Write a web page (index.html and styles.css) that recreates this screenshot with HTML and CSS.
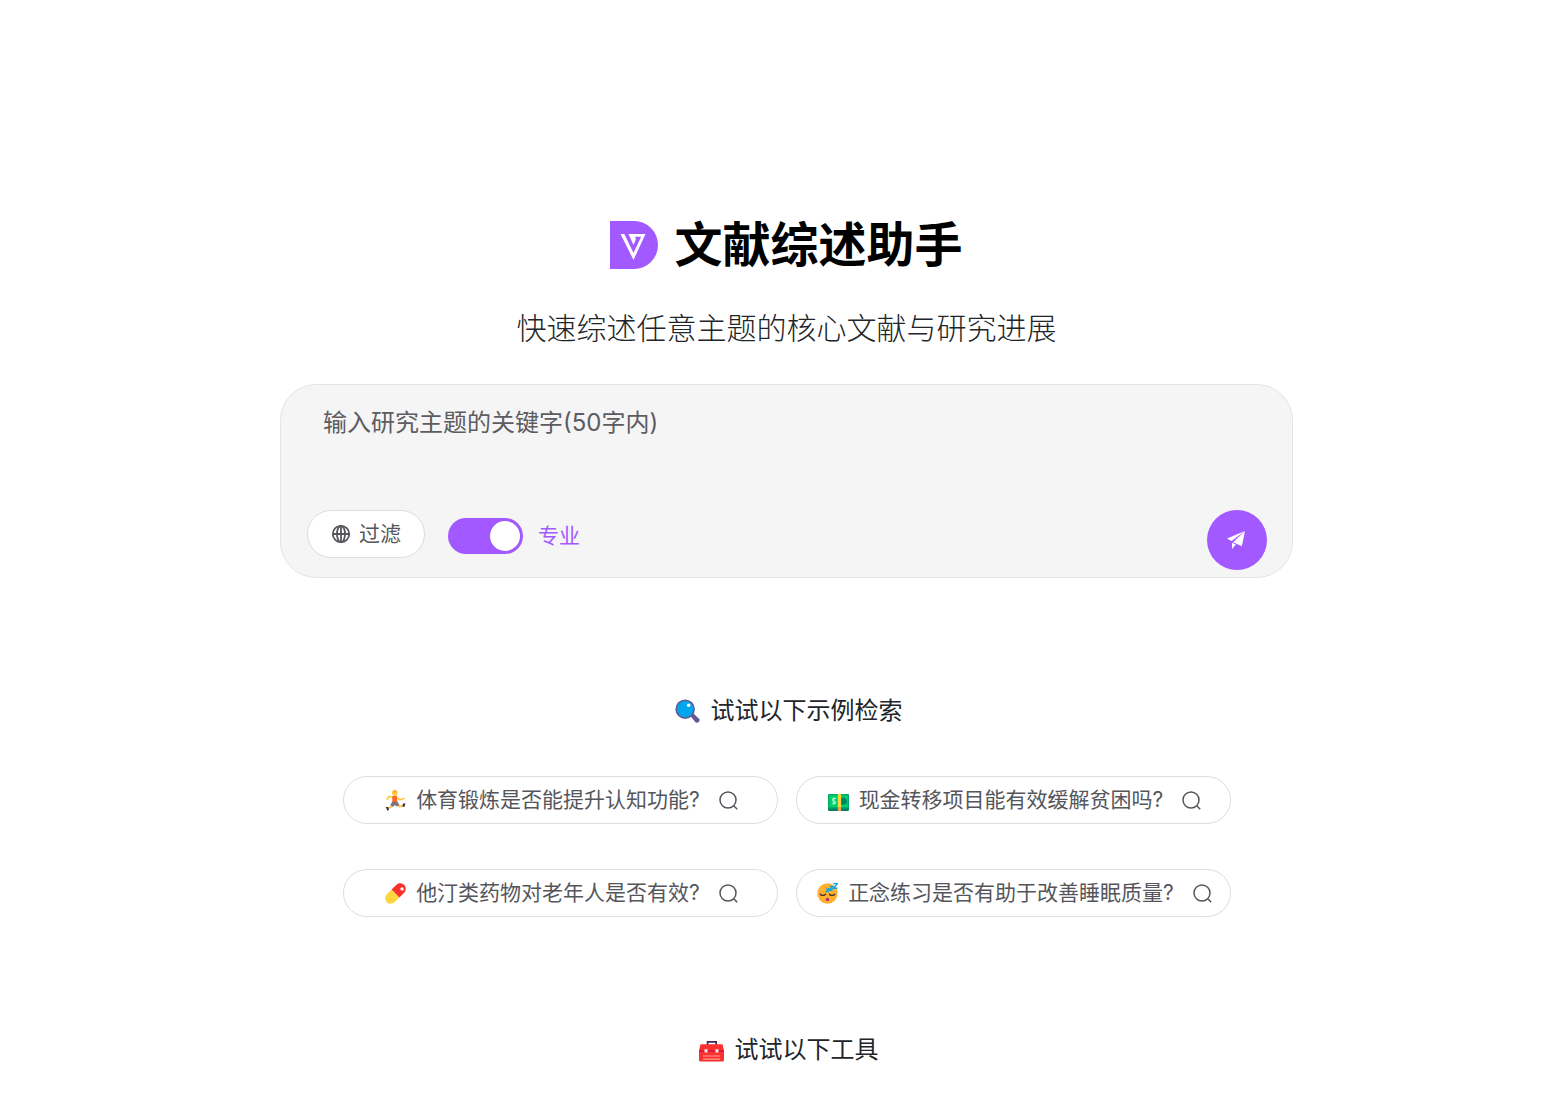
FILE: index.html
```html
<!DOCTYPE html>
<html lang="zh-CN">
<head>
  <meta charset="UTF-8" />
  <meta name="viewport" content="width=device-width, initial-scale=1.0" />
  <title>文献综述助手</title>
  <link rel="stylesheet" href="styles.css">
</head>
<body>

<main class="page">
  <header class="hero">
    <h1 class="title">
      <svg class="logo" viewBox="0 0 48 48" aria-hidden="true">
        <path d="M0 0h24a24 24 0 0 1 0 48H0z" fill="#a259ff"/>
        <path d="M10.500 13h3.800l9.200 19 7.600-16.300H25l1 2.300-2.500 6-5-11H35.500L23.500 39z" fill="#fff"/>
      </svg>
      文献综述助手
    </h1>
    <p class="subtitle">快速综述任意主题的核心文献与研究进展</p>
  </header>

  <form class="search-box" onsubmit="return false">
    <textarea class="topic" maxlength="50" aria-label="研究主题" placeholder="输入研究主题的关键字(50字内)"></textarea>
    <div class="toolbar">
      <button type="button" class="filter">
        <svg width="20" height="20" viewBox="0 0 20 20" fill="none" stroke="#55565c" stroke-width="1.800" aria-hidden="true">
          <circle cx="10" cy="10" r="8.200"/>
          <ellipse cx="10" cy="10" rx="4" ry="8.200"/>
          <path d="M2 10h16M10 2v16"/>
        </svg>
        过滤
      </button>
      <label class="mode">
        <input type="checkbox" class="switch" checked>
        专业
      </label>
      <button type="submit" class="send" aria-label="发送">
        <svg width="20" height="20" viewBox="0 0 20 20" fill="#fff" aria-hidden="true">
          <path d="M18 1L0 8.600l4.600 2.300z"/>
          <path d="M18 1L6.200 12.200l8.600 4z"/>
          <path d="M5 12.700v6.300l3.800-4.500z"/>
        </svg>
      </button>
    </div>
  </form>

  <section class="section">
    <h2 class="section-title">
      <svg class="emoji" viewBox="0 0 32 32" aria-hidden="true">
        <path d="M19 21l4-3 8 7.500c2 2.500-2 6.500-4.500 4.500z" fill="#635994"/>
        <circle cx="13" cy="13" r="12.500" fill="#635994"/>
        <circle cx="13" cy="13" r="10.500" fill="#00a6ed"/>
        <circle cx="17.500" cy="8" r="2.200" fill="#fff"/>
      </svg>
      试试以下示例检索
    </h2>

    <div class="examples">
      <button type="button" class="example">
        <svg class="emoji" viewBox="0 0 32 32" aria-hidden="true">
          <path d="M13 11l-7-1-3 4M19 12l4 3 6-2" fill="none" stroke="#ffc83d" stroke-width="2.500" stroke-linecap="round" stroke-linejoin="round"/>
          <path d="M13 21l-4 5-5 2M19 21l3 4 6-1" fill="none" stroke="#ffc83d" stroke-width="3" stroke-linejoin="round"/>
          <path d="M11 9h7l1 10h-8z" fill="#ff6723"/>
          <path d="M11 18h8l3 5-4 2-3-2-3 3-4-3z" fill="#7d7481"/>
          <circle cx="15" cy="5" r="4" fill="#ffc83d"/>
          <path d="M11 5c-1-6 8-7 8-1l-4-1z" fill="#ffb02e"/>
          <path d="M1 26l4 0 1 4-2 2zM27 21l4-1-1 5-3 1z" fill="#402a53"/>
        </svg>
        <span>体育锻炼是否能提升认知功能?</span>
        <svg class="lens" viewBox="0 0 21 21" aria-hidden="true"><circle cx="10" cy="10" r="8"/><path d="M15.500 15.500l3.700 3.700"/></svg>
      </button>
      <button type="button" class="example">
        <svg class="emoji" viewBox="0 0 32 32" aria-hidden="true">
          <path d="M0 10h32v20a2 2 0 0 1-2 2H2a2 2 0 0 1-2-2z" fill="#008463"/>
          <rect y="6" width="32" height="22" rx="1.500" fill="#00a86b"/>
          <rect x="2" y="8" width="28" height="18" fill="#00d26a"/>
          <circle cx="23" cy="17" r="5.500" fill="#008463"/>
          <path d="M12 13c-5-2-7 3-3 4s3 5-3 3M9 11v12" fill="none" stroke="#b9f5d8" stroke-width="1.600"/>
          <path d="M15 6h5v21h-5z" fill="#fcd53f"/>
          <path d="M15 27h5v5h-5z" fill="#f9a05b"/>
        </svg>
        <span>现金转移项目能有效缓解贫困吗?</span>
        <svg class="lens" viewBox="0 0 21 21" aria-hidden="true"><circle cx="10" cy="10" r="8"/><path d="M15.500 15.500l3.700 3.700"/></svg>
      </button>
      <button type="button" class="example">
        <svg class="emoji" viewBox="0 0 32 32" aria-hidden="true">
          <path d="M10 10L2.500 17.500a8.500 8.500 0 0 0 12 12L22 22z" fill="#fcd53f"/>
          <path d="M10 10l7.500-7.500a8.500 8.500 0 0 1 12 12L22 22z" fill="#f8312f"/>
          <circle cx="26" cy="9" r="2.600" fill="#fff"/>
        </svg>
        <span>他汀类药物对老年人是否有效?</span>
        <svg class="lens" viewBox="0 0 21 21" aria-hidden="true"><circle cx="10" cy="10" r="8"/><path d="M15.500 15.500l3.700 3.700"/></svg>
      </button>
      <button type="button" class="example">
        <svg class="emoji" viewBox="0 0 32 32" aria-hidden="true">
          <circle cx="16" cy="16" r="15.500" fill="#ffb02e"/>
          <path d="M5 17c1 2.500 7 2.500 8 0M19 17c1 2.500 7 2.500 8 0" fill="none" stroke="#402a32" stroke-width="2" stroke-linecap="round"/>
          <circle cx="16" cy="25" r="2.600" fill="#bb1d80"/>
          <path d="M14 9h4l-4 4h4M19 5h5l-5 6h5M25 1h6l-6 7h6" fill="none" stroke="#00a6ed" stroke-width="2"/>
        </svg>
        <span>正念练习是否有助于改善睡眠质量?</span>
        <svg class="lens" viewBox="0 0 21 21" aria-hidden="true"><circle cx="10" cy="10" r="8"/><path d="M15.500 15.500l3.700 3.700"/></svg>
      </button>
    </div>
  </section>

  <section class="section">
    <h2 class="section-title">
      <svg class="emoji" viewBox="0 0 32 32" aria-hidden="true">
        <path d="M11 9V5h11v4" fill="none" stroke="#402a53" stroke-width="2.200"/>
        <path d="M2 8h28l2 8v12a2 2 0 0 1-2 2H2a2 2 0 0 1-2-2V16z" fill="#f8312f"/>
        <path d="M0 16h32v1.500H0z" fill="#ca0b4a"/>
        <path d="M7 14.500h4v4H7zM21 14.500h4v4h-4z" fill="#e6e6e6"/>
        <path d="M5 23h22M5 27h22" stroke="#ff9a91" stroke-width="1.500"/>
      </svg>
      试试以下工具
    </h2>
  </section>
</main>

</body>
</html>
```
FILE: styles.css
```css
* {
  box-sizing: border-box;
}

body {
  margin: 0;
  background: #fff;
  color: #212529;
  font-family: Inter, "Noto Sans CJK SC", sans-serif;
}

button, input, textarea {
  font-family: inherit;
}

.page {
  padding: 209px 0 24px 13px;
}

.title {
  display: flex;
  align-items: center;
  justify-content: center;
  gap: 16px;
  margin: 0;
  font-size: 48px;
  line-height: 72px;
  font-weight: 700;
  color: #000;
}

.logo {
  width: 48px;
  height: 48px;
}

.subtitle {
  margin: 23px 0 32px;
  font-size: 30px;
  line-height: 48px;
  font-weight: 300;
  text-align: center;
}

.search-box {
  max-width: 1013px;
  margin: 0 auto;
  padding: 0 25px 7px 26px;
  border: 1px solid #e4e4e7;
  border-radius: 36px;
  background: #f5f5f5;
}

.topic {
  display: block;
  width: 100%;
  height: 125px;
  padding: 20px 16px;
  border: none;
  outline: none;
  resize: none;
  background: transparent;
  font-size: 24px;
  line-height: 36px;
  color: #212529;
}

.topic::placeholder {
  color: #5c5c62;
}

.toolbar {
  display: flex;
  align-items: flex-start;
}

.filter {
  display: flex;
  align-items: center;
  gap: 8px;
  height: 48px;
  padding: 0 23px;
  border: 1px solid #dcdce6;
  border-radius: 24px;
  background: #fff;
  font-size: 21px;
  line-height: 30px;
  color: #55565c;
  cursor: pointer;
}

.mode {
  display: flex;
  align-items: center;
  gap: 15px;
  height: 52px;
  margin-left: 23px;
  font-size: 21px;
  line-height: 30px;
  color: #a259ff;
}

.switch {
  appearance: none;
  width: 75px;
  height: 36px;
  margin: 0;
  padding: 3px;
  border-radius: 18px;
  background: #c4c4cc;
  cursor: pointer;
}

.switch::before {
  content: "";
  display: block;
  width: 30px;
  height: 30px;
  border-radius: 50%;
  background: #fff;
}

.switch:checked {
  background: #a259ff;
}

.switch:checked::before {
  margin-left: auto;
}

.send {
  display: flex;
  align-items: center;
  justify-content: center;
  width: 60px;
  height: 60px;
  margin-left: auto;
  padding: 0;
  border: none;
  border-radius: 50%;
  background: #a259ff;
  cursor: pointer;
}

.section {
  margin-top: 115px;
}

.section-title {
  display: flex;
  align-items: center;
  justify-content: center;
  gap: 7px;
  margin: 0;
  font-size: 24px;
  line-height: 36px;
  font-weight: 400;
}

.emoji {
  flex: none;
  width: 25px;
  height: 25px;
  margin: 0 4px;
}

.examples {
  display: grid;
  grid-template-columns: 1fr 1fr;
  gap: 45px 18px;
  max-width: 888px;
  margin: 47px auto 0;
}

.example {
  display: flex;
  align-items: center;
  justify-content: center;
  height: 48px;
  padding: 0 12px;
  border: 1px solid #dcdce6;
  border-radius: 24px;
  background: #fff;
  font-size: 21px;
  line-height: 30px;
  color: #55565c;
  cursor: pointer;
}

.example .emoji {
  width: 21px;
  height: 21px;
  margin-right: 10px;
}

.lens {
  flex: none;
  width: 21px;
  height: 21px;
  margin-left: 18px;
  fill: none;
  stroke: #55565c;
  stroke-width: 1.5;
}

.filter:hover, .example:hover {
  border-color: #a259ff;
}
```
